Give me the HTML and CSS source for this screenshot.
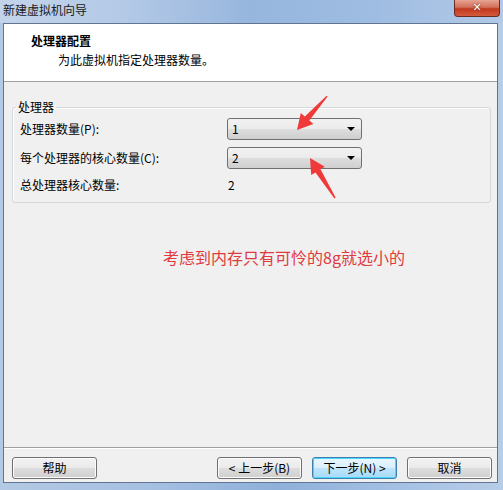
FILE: index.html
```html
<!DOCTYPE html>
<html lang="zh-CN">
<head>
<meta charset="utf-8">
<link rel="stylesheet" href="styles.css">
</head>
<body>
<div class="window">
  <div class="titlebar">
    <span class="title">新建虚拟机向导</span>
    <span class="close">✕</span>
  </div>
  <div class="client">
    <div class="header">
      <div class="h-title">处理器配置</div>
      <div class="h-sub">为此虚拟机指定处理器数量。</div>
    </div>
    <div class="main">
      <fieldset class="group">
        <legend>处理器</legend>
        <div class="grid">
          <span class="lbl">处理器数量(P):</span>
          <div class="combo"><span>1</span><i class="tri"></i></div>
          <span class="lbl">每个处理器的核心数量(C):</span>
          <div class="combo"><span>2</span><i class="tri"></i></div>
          <span class="lbl">总处理器核心数量:</span>
          <span class="val">2</span>
        </div>
      </fieldset>
      <div class="note">考虑到内存只有可怜的8g就选小的</div>
    </div>
    <div class="footer">
      <button class="btn">帮助</button>
      <div class="right">
        <button class="btn">&lt; 上一步(B)</button>
        <button class="btn primary">下一步(N) &gt;</button>
        <button class="btn">取消</button>
      </div>
    </div>
  </div>
  <svg class="arrows" width="503" height="490" viewBox="0 0 503 490">
    <polygon points="326.6,95.7 327.6,96.5 309.35,120.5 313.4,124 297,130 300.8,113 304.85,116.5" fill="#f03a3a"/>
    <polygon points="335.6,197.6 334.4,198.4 315.5,172.5 311.2,175.1 310,158 324.8,166.7 320.5,169.3" fill="#f03a3a"/>
  </svg>
</div>
</body>
</html>
```
FILE: styles.css
```css
* { box-sizing: border-box; }
html, body { margin: 0; padding: 0; }
body {
  width: 503px;
  height: 490px;
  overflow: hidden;
  font-family: "Noto Sans CJK SC", "Noto Sans", sans-serif;
  font-size: 12px;
  color: #000;
}
.window {
  position: relative;
  width: 503px;
  height: 490px;
  display: flex;
  flex-direction: column;
  background: linear-gradient(90deg, #b3c9e4 0%, #a6c0e2 30%, #8fb0da 55%, #a5c1e4 80%, #b7cde8 100%);
}
.titlebar {
  height: 23px;
  display: flex;
  align-items: flex-start;
  background: linear-gradient(90deg, #c3d4ea 0%, #b3c9e6 25%, #97b6de 50%, #9fbde2 75%, #b2c9e7 100%);
}
.title {
  padding: 2px 0 0 3px;
  line-height: 16px;
  font-size: 12px;
  color: #1a1a1a;
}
.close {
  margin-left: auto;
  margin-right: 3px;
  width: 46px;
  height: 17px;
  border: 1px solid #6b2a22;
  border-top: none;
  border-radius: 0 0 4px 4px;
  background: linear-gradient(180deg, #e8a493 0%, #d2705a 45%, #c0391f 55%, #d55a3c 100%);
  color: #fff;
  font-family: "DejaVu Sans", sans-serif;
  font-weight: bold;
  font-size: 11px;
  line-height: 15px;
  text-align: center;
  text-shadow: 0 0 2px #6b1a10;
}
.client {
  margin: 0 5px 7px 3px;
  flex: 1;
  display: flex;
  flex-direction: column;
  background: #f0f0f0;
  border: 1px solid #5f7592;
}
.header {
  height: 58px;
  background: #fff;
  border-bottom: 1px solid #a0a0a0;
  padding: 9px 0 0 27px;
  line-height: 16px;
}
.h-title { font-weight: bold; }
.h-sub { margin: 3px 0 0 27px; }
.main {
  flex: 1;
  padding: 17px 6px 0 8px;
}
.group {
  margin: 0;
  padding: 3px 7px 8px 7px;
  border: 1px solid #d3d8dc;
  border-radius: 3px;
  box-shadow: inset 1px 1px 0 #fff;
}
.group legend {
  padding: 0 2px;
  margin-left: -4px;
  line-height: 16px;
}
.grid {
  display: grid;
  grid-template-columns: 207px 135px;
  grid-template-rows: 22px 22px 18px;
  row-gap: 7px;
  align-items: center;
  line-height: 16px;
}
.combo {
  height: 22px;
  border: 1px solid #707070;
  border-radius: 3px;
  background: linear-gradient(180deg, #f2f2f2 0%, #ebebeb 48%, #dddddd 52%, #cfcfcf 100%);
  display: flex;
  align-items: center;
  padding: 0 5px 0 4px;
}
.combo span { flex: 1; }
.tri {
  width: 0;
  height: 0;
  border-left: 4px solid transparent;
  border-right: 4px solid transparent;
  border-top: 4px solid #000;
  margin-right: 1px;
}
.val { padding-left: 1px; }
.note {
  margin: 44px 0 0 151px;
  font-size: 16px;
  line-height: 20px;
  color: #e13a3e;
}
.footer {
  border-top: 1px solid #a0a0a0;
  box-shadow: inset 0 1px 0 #fff;
  padding: 9px 5px 3px 8px;
  display: flex;
  justify-content: space-between;
}
.right { display: flex; gap: 10px; }
.btn {
  width: 85px;
  height: 22px;
  padding: 0;
  font-family: inherit;
  font-size: 12px;
  color: #000;
  border: 1px solid #707070;
  border-radius: 3px;
  background: linear-gradient(180deg, #f2f2f2 0%, #ebebeb 48%, #dddddd 52%, #cfcfcf 100%);
  box-shadow: inset 0 0 0 1px #fcfcfc;
  line-height: 18px;
}
.btn.primary {
  border-color: #3c7fb1;
  background: linear-gradient(180deg, #eaf6fd 0%, #d9f0fc 48%, #bee6fd 52%, #a7d9f5 100%);
  box-shadow: inset 0 0 0 1px #48d8fb;
}
.arrows {
  position: absolute;
  top: 0;
  left: 0;
  pointer-events: none;
}
```
